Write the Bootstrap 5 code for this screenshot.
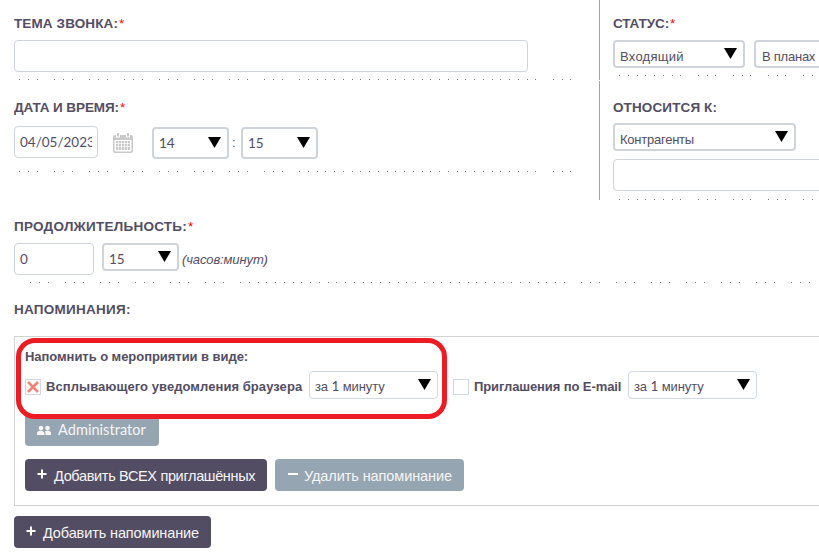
<!DOCTYPE html>
<html lang="ru">
<head>
<meta charset="utf-8">
<title>Звонок</title>
<link rel="stylesheet" href="https://cdn.jsdelivr.net/npm/bootstrap@5.3.0/dist/css/bootstrap.min.css">
<style>
body{width:819px;height:554px;overflow:hidden;background:#fff;color:#534d64;font:13px/16px "Liberation Sans",Arial,sans-serif}
.band-top{height:80px}
.band-mid{height:119px;margin-top:1px}
.band-wide{display:flow-root;padding-left:14px}
.cell-left{width:600px;padding-left:14px}
.cell-right{width:219px;padding-left:13px;overflow:hidden}
.vline{border-right:1px solid #94a6b5}
.caption{font-weight:700;font-size:13.5px;line-height:16px;height:16px;margin-top:19px;white-space:nowrap}
.band-top .caption{margin-top:16px}
.caption i{color:#f00;font-style:normal;font-weight:400;display:inline-block;margin-left:1px}
.field{border:1px solid #cfd3da;border-radius:4px;height:32px;padding:0 5px;background:#fff;white-space:nowrap;flex:none;display:flex;align-items:center}
.field span{overflow:hidden;line-height:20px}
.picker{border:2px solid #cfd3da;border-radius:4px;height:28px;padding:0 5px;background:#fff;white-space:nowrap;flex:none;display:flex;align-items:center;justify-content:space-between}
.picker>svg{flex:none;width:13px;height:11px;margin:-2px 1px 0 0}
.picker.tall{height:32px;margin-top:2px}
.picker.tall>svg{margin-top:-1px}
.picker.thin{border-width:1px;border-color:#cfd8e2;width:129px}
.low{padding-top:5px}
.num .low{padding-top:3px}
.thin .low{padding-top:2px}
.num{font-family:Lato,sans-serif;font-size:13.5px}
.w-full{width:514px}.w-date{width:84px}.w-hours{width:80px}.w-parent{width:260px}
.w-small{width:77px}.w-status{width:132px}.w-type{width:183px}
.plan{margin-left:9px;padding-left:6px}
.g8{margin-top:8px}.g7{margin-top:7px}
.date-row{margin-top:10px;height:32px}
.cal{margin:2px 19px 0 15px}
.colon{width:12px;padding:2px 0 0 3px}
.rule{display:block;height:1px;width:100%;margin-top:7px}
.after-date{margin-top:13px}
.after-parent{margin-top:8px}
.units{margin:9px 0 0 3px;letter-spacing:-.12px}
.reminders{border:1px solid #d2d2d2;border-right:0;height:170px;margin:18px 0 0 14px;padding:12px 0 0 10px}
.strong-text{font-weight:700;white-space:nowrap}
.channels{margin-top:6px}
.label-popup{margin:3px 0 0 5px;width:263px;letter-spacing:.06px}
.label-mail{margin:3px 0 0 5px;width:154px}
.tick{width:16px;height:16px;border:1px solid #cfd8e2;flex:none;margin-top:3px}
.tick-next{margin-left:15px}
.action{border:0;border-radius:4px;height:32px;padding:0 12px;color:#f5f5f5;font-size:14.5px;line-height:32px;white-space:nowrap;flex:none;display:flex;align-items:center}
.action svg{flex:none}
.action .plus{margin:0 7px 3px 0}
.action .minus{margin:-2px 5px 0 1px}
.action span{padding-top:2px}
.dark{background:#534d64}.steel{background:#95a5b2}
.invitee{width:134px;margin-top:15px}
.invitee span{margin-left:7px;padding:0;font-family:Lato,sans-serif;letter-spacing:.06px}
.tools{gap:8px;margin-top:13px}
.b-all{width:242px;letter-spacing:-.34px}.b-remove{width:189px;letter-spacing:-.09px}.b-add{width:197px;letter-spacing:-.12px;margin:10px 0 0 14px}
.sp1{letter-spacing:.12px}.sp2{letter-spacing:.25px}.sn1{letter-spacing:-.1px}.sn2{letter-spacing:-.24px}.sn3{letter-spacing:-.05px}
.outline-mark{left:16px;top:338px;width:431px;height:81px;border:5px solid #ed1c24;border-radius:19px}
</style>
<script src="https://cdn.jsdelivr.net/npm/bootstrap@5.3.0/dist/js/bootstrap.bundle.min.js"></script>
</head>
<body class="position-relative">
<svg class="d-none"><symbol id="down" viewBox="0 0 13 11"><path d="M0 0h13L6.500 11z" fill="#000"/></symbol></svg>

<div class="d-flex band-top">
  <div class="cell-left vline flex-shrink-0">
    <div class="caption"><span class="sp1">ТЕМА ЗВОНКА:</span><i>*</i></div>
    <div class="field w-full g8"></div>
    <svg class="rule" data-start="5" data-count="64" data-gaps="3,7,11,15,19,23,27,31,60"></svg>
  </div>
  <div class="cell-right">
    <div class="caption"><span class="sn1">СТАТУС:</span><i>*</i></div>
    <div class="d-flex g8">
      <div class="picker w-status"><span class="low sp2">Входящий</span><svg><use href="#down"/></svg></div>
      <div class="picker w-status plan"><span class="low sn2">В планах</span></div>
    </div>
    <svg class="rule" data-start="6" data-count="24" data-gaps="8,12,16,20"></svg>
  </div>
</div>

<div class="d-flex band-mid">
  <div class="cell-left vline flex-shrink-0">
    <div class="caption"><span class="sn1">ДАТА И ВРЕМЯ:</span><i>*</i></div>
    <div class="d-flex align-items-center date-row">
      <div class="field num w-date"><span>04/05/2023</span></div>
      <svg class="cal" width="20" height="20" viewBox="0 0 20 20"><path d="M0 4q0-2 2-2h16q2 0 2 2v14q0 2-2 2H2q-2 0-2-2z" fill="#c9c9c9"/><path d="M1.500 7h17v10q0 1.500-1.500 1.500H3q-1.500 0-1.500-1.500z" fill="#fff"/><path d="M3 0h4v4.500H3zM13 0h4v4.500h-4z" fill="#fff"/><path d="M4 0h2v3.500H4zM14 0h2v3.500h-2z" fill="#c9c9c9"/><path d="M3 8h14v9H3z" fill="#c9c9c9"/><path d="M5.500 8v9M8.500 8v9M11.500 8v9M14.500 8v9M3 10.500h14M3 13.500h14" stroke="#fff" stroke-width=".7"/></svg>
      <div class="picker tall num w-small"><span>14</span><svg><use href="#down"/></svg></div>
      <span class="colon">:</span>
      <div class="picker tall num w-small"><span>15</span><svg><use href="#down"/></svg></div>
    </div>
    <svg class="rule after-date" data-start="5" data-count="64" data-gaps="3,7,11,15,19,23,27,31,60"></svg>
  </div>
  <div class="cell-right">
    <div class="caption"><span class="sp1">ОТНОСИТСЯ К:</span></div>
    <div class="picker w-type g7"><span class="low sn2">Контрагенты</span><svg><use href="#down"/></svg></div>
    <div class="field w-parent g8"></div>
    <svg class="rule after-parent" data-start="6" data-count="24" data-gaps="8,12,16,20"></svg>
  </div>
</div>

<div class="band-wide">
  <div class="caption"><span class="sp2">ПРОДОЛЖИТЕЛЬНОСТЬ:</span><i>*</i></div>
  <div class="d-flex g8">
    <div class="field num w-hours"><span>0</span></div>
    <div class="picker num w-small ms-2"><span class="low">15</span><svg><use href="#down"/></svg></div>
    <em class="units">(часов:минут)</em>
  </div>
  <svg class="rule" data-start="16" data-count="90" data-gaps="3,7,11,15,19,23,62,66,70,74,78,82,86"></svg>
  <div class="caption"><span class="sp2">НАПОМИНАНИЯ:</span></div>
</div>

<div class="reminders">
  <div class="strong-text sn3">Напомнить о мероприятии в виде:</div>
  <div class="d-flex align-items-center channels">
    <span class="tick"><svg class="d-block" width="14" height="14" viewBox="0 0 14 14"><path d="M2 2l10 10M12 2L2 12" stroke="#f08377" stroke-width="2.600"/></svg></span>
    <span class="strong-text label-popup">Всплывающего уведомления браузера</span>
    <div class="picker thin"><span class="low sn1">за <span class="num">1</span> минуту</span><svg><use href="#down"/></svg></div>
    <span class="tick tick-next"></span>
    <span class="strong-text label-mail sn1">Приглашения по E-mail</span>
    <div class="picker thin"><span class="low sn1">за <span class="num">1</span> минуту</span><svg><use href="#down"/></svg></div>
  </div>
  <div class="action steel invitee"><svg width="14" height="11" viewBox="0 0 14 11"><g fill="#f5f5f5"><circle cx="4" cy="3" r="2.300"/><circle cx="10.500" cy="3" r="2.300"/><path d="M0 10V8q0-2 4-2.500Q7 6 7.500 8v2zM8.500 10V8L8 6.300l2.500-.8q3.500.5 3.500 2.500v2z"/></g></svg><span>Administrator</span></div>
  <div class="d-flex tools">
    <div class="action dark b-all"><svg class="plus" width="10" height="10" viewBox="0 0 10 10"><path d="M5 .5v9M.5 5h9" stroke="#fff" stroke-width="2"/></svg><span>Добавить ВСЕХ приглашённых</span></div>
    <div class="action steel b-remove"><svg class="minus" width="11" height="10" viewBox="0 0 11 10"><path d="M0 5h10" stroke="#fff" stroke-width="2"/></svg><span>Удалить напоминание</span></div>
  </div>
</div>
<div class="action dark b-add"><svg class="plus" width="10" height="10" viewBox="0 0 10 10"><path d="M5 .5v9M.5 5h9" stroke="#fff" stroke-width="2"/></svg><span>Добавить напоминание</span></div>

<div class="outline-mark position-absolute"></div>
<script>
// Dotted rules: one-pixel dots every 8.75px, with some positions left out.
document.querySelectorAll('svg.rule').forEach(function (s) {
  var x0 = +s.dataset.start, gaps = s.dataset.gaps.split(',').map(Number), d = '';
  for (var n = 0; n < +s.dataset.count; n++) if (gaps.indexOf(n) < 0) d += 'M' + Math.round(x0 + n * 8.75) + ' 0h1v1h-1z';
  var p = document.createElementNS('http://www.w3.org/2000/svg', 'path');
  p.setAttribute('d', d); p.setAttribute('fill', '#777'); s.appendChild(p);
});
</script>
</body>
</html>
